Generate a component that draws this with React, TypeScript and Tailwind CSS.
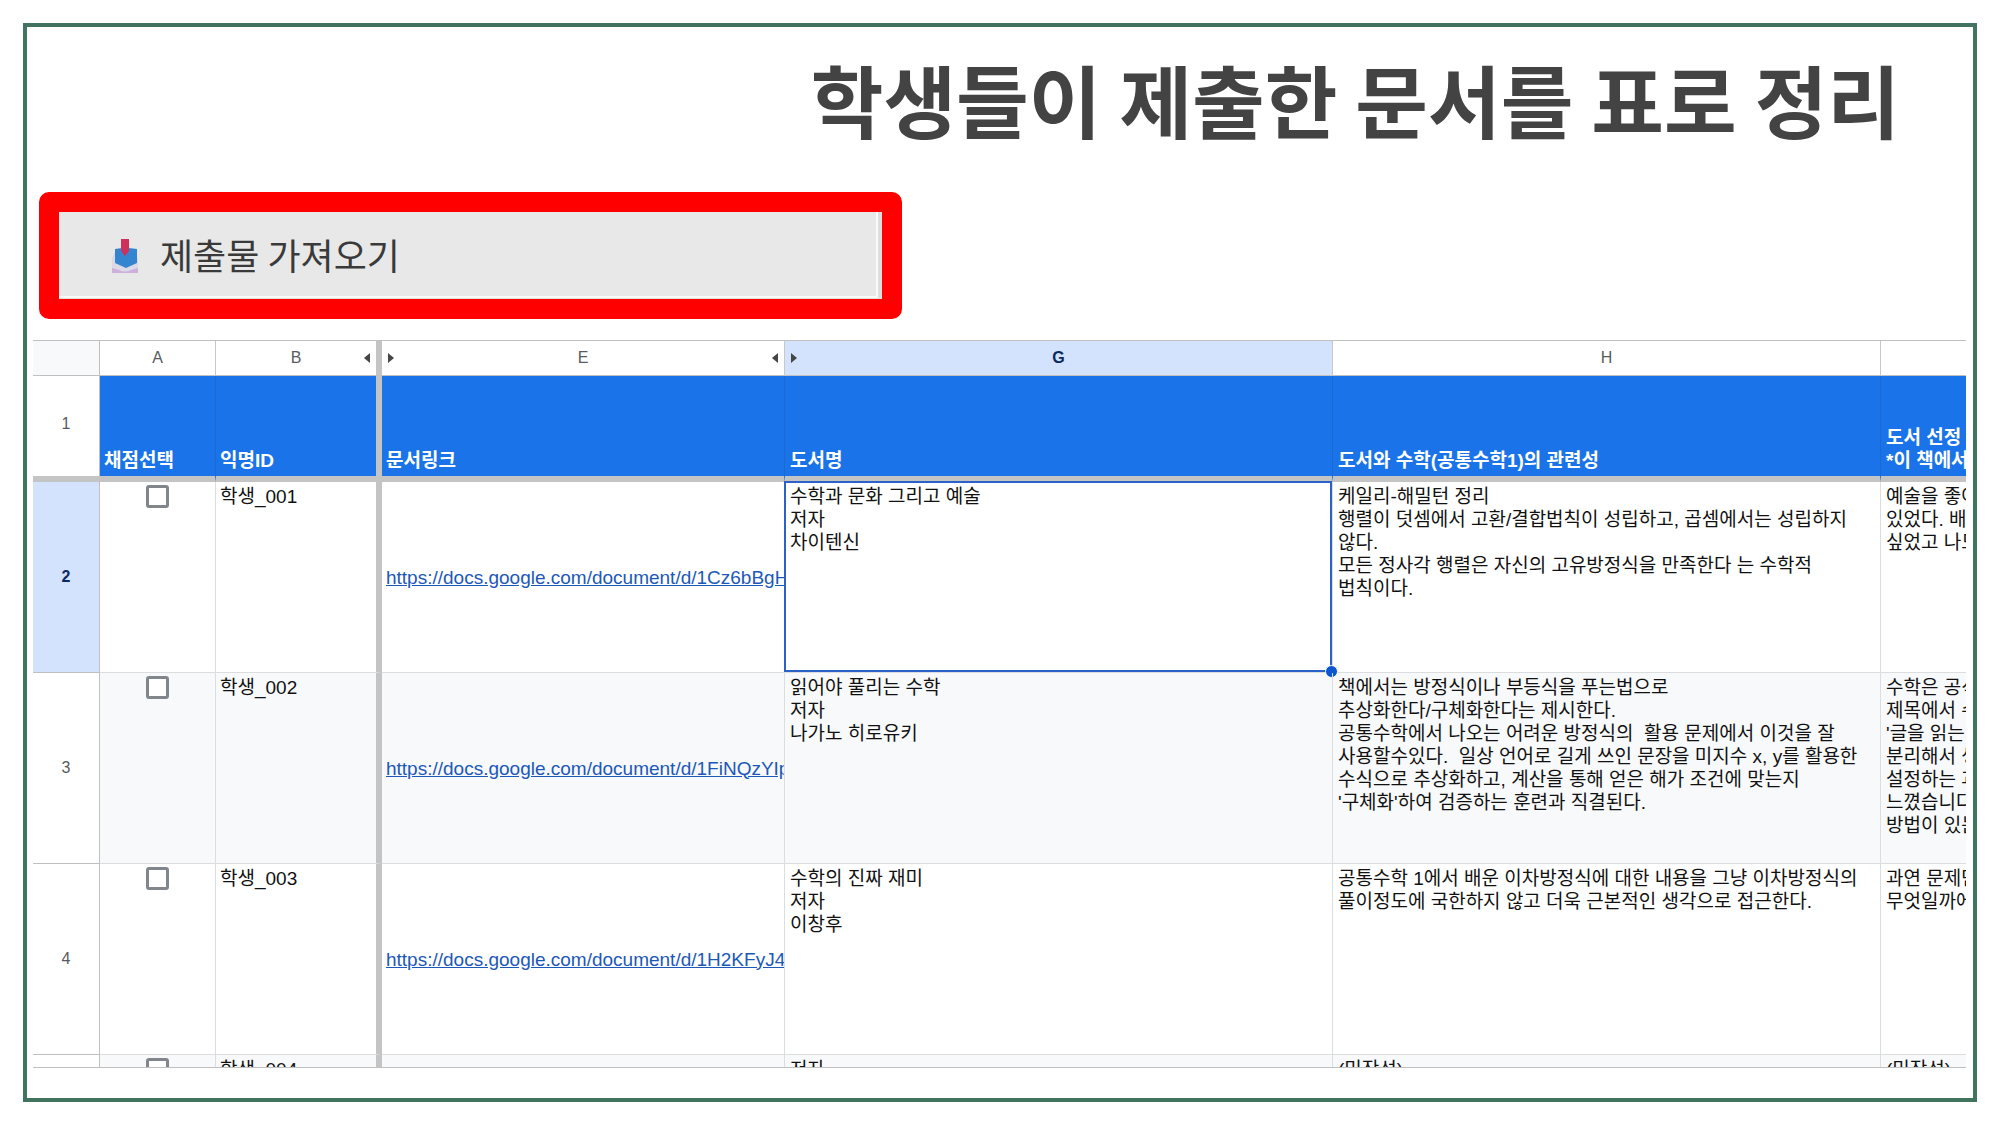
import { ReactNode } from "react";

type Row = {
  no: number;
  id: string;
  link: string;
  book: string;
  relation: string;
  reason: string;
};

const rows: Row[] = [
  {
    no: 2,
    id: "학생_001",
    link: "https://docs.google.com/document/d/1Cz6bBgH",
    book: "수학과 문화 그리고 예술\n저자\n차이텐신",
    relation:
      "케일리-해밀턴 정리\n행렬이 덧셈에서 고환/결합법칙이 성립하고, 곱셈에서는 성립하지\n않다.\n모든 정사각 행렬은 자신의 고유방정식을 만족한다 는 수학적\n법칙이다.",
    reason: "예술을 좋아\n있었다. 배움\n싶었고 나도",
  },
  {
    no: 3,
    id: "학생_002",
    link: "https://docs.google.com/document/d/1FiNQzYIp",
    book: "읽어야 풀리는 수학\n저자\n나가노 히로유키",
    relation:
      "책에서는 방정식이나 부등식을 푸는법으로\n추상화한다/구체화한다는 제시한다.\n공통수학에서 나오는 어려운 방정식의  활용 문제에서 이것을 잘\n사용할수있다.  일상 언어로 길게 쓰인 문장을 미지수 x, y를 활용한\n수식으로 추상화하고, 계산을 통해 얻은 해가 조건에 맞는지\n'구체화'하여 검증하는 훈련과 직결된다.",
    reason: "수학은 공식\n제목에서 수\n'글을 읽는 \n분리해서 생\n설정하는 과\n느꼈습니다\n방법이 있는",
  },
  {
    no: 4,
    id: "학생_003",
    link: "https://docs.google.com/document/d/1H2KFyJ4",
    book: "수학의 진짜 재미\n저자\n이창후",
    relation:
      "공통수학 1에서 배운 이차방정식에 대한 내용을 그냥 이차방정식의\n풀이정도에 국한하지 않고 더욱 근본적인 생각으로 접근한다.",
    reason: "과연 문제만\n무엇일까에",
  },
  {
    no: 5,
    id: "학생_004",
    link: "",
    book: "저자",
    relation: "(미작성)",
    reason: "(미작성)",
  },
];

function InboxIcon() {
  return (
    <svg viewBox="0 0 28 36" className="h-9 w-7" aria-hidden="true">
      <path d="M1 20 L4 14 H24 L27 20 V35 H1 Z" fill="#dcdae6" />
      <path d="M1 30 L8 32 Q14 35 20 32 L27 30 V35 H1 Z" fill="#cdb0dc" />
      <path d="M4 11 Q14 9 26 11 V25 L15 30 L4 25 Z" fill="#3484cf" />
      <path d="M10 1 H18 V13 L14 18 L10 13 Z" fill="#cf2f5b" />
    </svg>
  );
}

function Arrow({ left = false }: { left?: boolean }) {
  return (
    <svg viewBox="0 0 6 10" className="h-[10px] w-[6px] fill-[#444746]" aria-hidden="true">
      <path d={left ? "M6 0 L0 5 L6 10 Z" : "M0 0 L6 5 L0 10 Z"} />
    </svg>
  );
}

function ColumnHead({
  letter,
  before,
  after,
  className = "border-r border-[#c8c8c8] font-normal",
}: {
  letter: string;
  before?: ReactNode;
  after?: ReactNode;
  className?: string;
}) {
  return (
    <th scope="col" className={`border-b border-b-[#c0c0c0] px-[6px] ${className}`}>
      <div className="grid grid-cols-[6px_1fr_6px] items-center">
        <span>{before}</span>
        <span className="text-center">{letter}</span>
        <span>{after}</span>
      </div>
    </th>
  );
}

export default function App() {
  const title = "border-b-6 border-b-[#c4c4c4] pb-1 align-bottom";
  const cell = "border-r border-b border-[#dcdddf] pt-[3px] align-top";

  return (
    <div className="bg-white p-[23px] font-['Liberation_Sans','Noto_Sans_CJK_KR',sans-serif]">
      <main className="border-4 border-[#41745f] pr-[7px] pb-[30px] pl-[6px]">
        <h1 className="pt-4 pb-1 pr-[66px] text-right font-['Noto_Sans_CJK_KR',sans-serif] text-[79px] leading-[112px] font-bold text-[#434343]">
          학생들이 제출한 문서를 표로 정리
        </h1>

        <button
          type="button"
          className="mt-[33px] ml-[6px] flex h-[127px] w-[863px] max-w-full items-center rounded-[10px] border-20 border-[#ff0000] bg-[#e8e8e8] pl-[52px] text-left font-['Noto_Sans_CJK_KR',sans-serif] text-[36px] leading-10 text-[#3a3a3a] shadow-[inset_-4px_-1px_0_#dedede,inset_-6px_-3px_0_#fafafa]"
        >
          <InboxIcon />
          <span className="ml-[21px] pb-1">제출물 가져오기</span>
        </button>

        <div className="mt-[21px] h-[728px] overflow-hidden border-t border-b border-[#c0c0c0]">
          <table className="w-full table-fixed border-separate border-spacing-0 text-[19px] leading-[23px] text-[#111111]">
            <colgroup>
              <col className="w-[67px]" />
              <col className="w-[116px]" />
              <col className="w-[166px]" />
              <col className="w-[403px]" />
              <col className="w-[548px]" />
              <col className="w-[548px]" />
              <col />
            </colgroup>
            <thead>
              <tr className="h-[35px] text-base text-[#575b5f]">
                <td className="border-r border-b border-[#c0c0c0] bg-[#f8f9fa]"></td>
                <ColumnHead letter="A" />
                <ColumnHead
                  letter="B"
                  after={<Arrow left />}
                  className="border-r-6 border-r-[#c4c4c4] font-normal"
                />
                <ColumnHead letter="E" before={<Arrow />} after={<Arrow left />} />
                <ColumnHead
                  letter="G"
                  before={<Arrow />}
                  className="border-r border-r-[#c8c8c8] bg-[#d3e3fd] font-bold text-[#0b2a5e]"
                />
                <ColumnHead letter="H" />
                <td className="border-b border-[#c0c0c0]"></td>
              </tr>
              <tr className="h-[106px] bg-[#1a73e8] text-left whitespace-pre text-white">
                <th
                  scope="row"
                  className="border-r border-b-6 border-r-[#c0c0c0] border-b-[#c4c4c4] bg-white pb-1 text-center text-base font-normal text-[#575b5f]"
                >
                  1
                </th>
                <th className={`${title} border-r border-r-[#1a69d4] pl-1`}>채점선택</th>
                <th className={`${title} border-r-6 border-r-[#c4c4c4] pl-1`}>익명ID</th>
                <th className={`${title} border-r border-r-[#1a69d4] pl-1`}>문서링크</th>
                <th className={`${title} border-r border-r-[#1a69d4] pl-[5px]`}>도서명</th>
                <th className={`${title} border-r border-r-[#1a69d4] pl-[5px]`}>도서와 수학(공통수학1)의 관련성</th>
                <th className={`${title} overflow-hidden pl-[5px]`}>{"도서 선정 이유\n*이 책에서"}</th>
              </tr>
            </thead>
            <tbody>
              {rows.map((row) => {
                const selected = row.no === 2;
                return (
                  <tr
                    key={row.no}
                    className={row.no % 2 ? "h-[191px] bg-[#f8f9fb] whitespace-pre" : "h-[191px] whitespace-pre"}
                  >
                    <th
                      scope="row"
                      className={`border-r border-b border-[#c0c0c0] text-base ${
                        selected ? "bg-[#d3e3fd] font-bold text-[#0b2a5e]" : "bg-white font-normal text-[#575b5f]"
                      }`}
                    >
                      {row.no}
                    </th>
                    <td className={cell}>
                      <input
                        type="checkbox"
                        aria-label={`${row.id} 채점선택`}
                        className="mx-auto block size-[23px] appearance-none rounded-[3px] border-3 border-[#80868b] bg-white"
                      />
                    </td>
                    <td className={`${cell} border-r-6 border-r-[#c4c4c4] pl-1`}>{row.id}</td>
                    <td className="overflow-hidden border-r border-b border-[#dcdddf] pl-1 align-middle">
                      {row.link && (
                        <a href={row.link} className="text-[#1c58b8] underline">
                          {row.link}
                        </a>
                      )}
                    </td>
                    <td className={`${cell} relative pl-[5px]`}>
                      {row.book}
                      {selected && (
                        <span className="pointer-events-none absolute -top-px right-0 bottom-0 -left-px border-2 border-[#2b62c9]">
                          <span className="absolute -right-2 -bottom-2 size-[13px] rounded-full border border-white bg-[#0b57d0]" />
                        </span>
                      )}
                    </td>
                    <td className={`${cell} pl-[5px]`}>{row.relation}</td>
                    <td className="overflow-hidden border-b border-[#dcdddf] pt-[3px] pl-[5px] align-top">
                      {row.reason}
                    </td>
                  </tr>
                );
              })}
            </tbody>
          </table>
        </div>
      </main>
    </div>
  );
}
